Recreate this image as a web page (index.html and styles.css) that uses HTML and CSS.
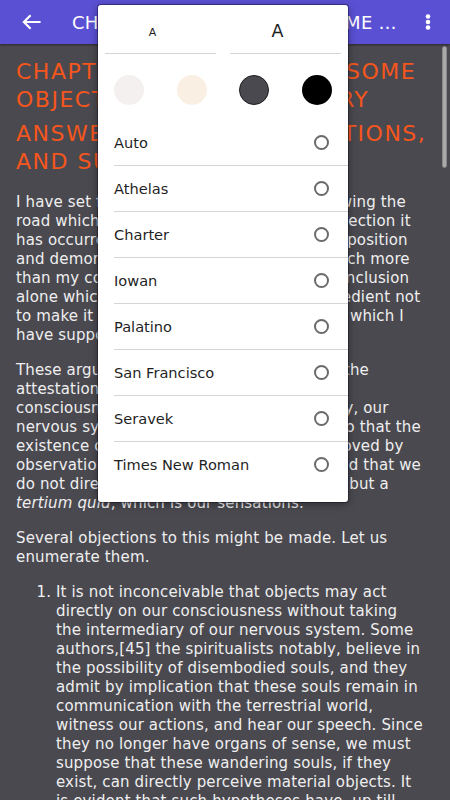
FILE: index.html
```html
<!DOCTYPE html>
<html lang="en">
<head>
<meta charset="utf-8">
<title>Reader</title>
<link rel="stylesheet" href="styles.css">
</head>
<body>
<div class="screen">
  <header class="appbar">
    <button class="icon-btn back-btn" aria-label="Back">
      <svg width="24" height="24" viewBox="0 0 24 24"><path d="M21.6 12H5.2M11.6 5.3L4.9 12l6.7 6.7" fill="none" stroke="#fff" stroke-width="2.2"/></svg>
    </button>
    <div class="appbar-title">Chapter VIII: Replies to Some Objections</div>
    <button class="icon-btn menu-btn" aria-label="More">
      <svg width="24" height="24" viewBox="0 0 24 24"><circle cx="12" cy="6.5" r="2.3" fill="#fff"/><circle cx="12" cy="12" r="2.3" fill="#fff"/><circle cx="12" cy="17.5" r="2.3" fill="#fff"/></svg>
    </button>
  </header>

  <main class="reader">
    <h1 class="chapter-title">Chapter VIII: Replies to Some Objections — Preliminary</h1>
    <h2 class="chapter-title sub">Answers to These Questions, and Summary</h2>
    <p>I have set forth these few ideas here, following the road which seemed the most direct. On reflection it has occurred to me that the order of my exposition and demonstration interests the reader much more than my conclusions; and it is never the conclusion alone which matters. I have thought it expedient not to make it a summary of all the reasons by which I have supposed it to be proven.</p>
    <p>These arguments are founded solely upon the attestation of experience, and of our own consciousness which showed us that, finally, our nervous system alone is perceived by us, so that the existence of objects has never yet been proved by observation. It must therefore be recognized that we do not directly perceive the actual objects, but a <em>tertium quid</em>, which is our sensations.</p>
    <p>Several objections to this might be made. Let us enumerate them.</p>
    <ol class="objections">
      <li>It is not inconceivable that objects may act directly on our consciousness without taking the intermediary of our nervous system. Some authors,<a class="note" href="#n45">[45]</a> the spiritualists notably, believe in the possibility of disembodied souls, and they admit by implication that these souls remain in communication with the terrestrial world, witness our actions, and hear our speech. Since they no longer have organs of sense, we must suppose that these wandering souls, if they exist, can directly perceive material objects. It is evident that such hypotheses have, up till now, received no scientific verification.</li>
    </ol>
  </main>

  <div class="scroll-thumb"></div>

  <div class="settings-popup">
    <div class="size-row">
      <button class="size-btn small">A</button>
      <button class="size-btn large">A</button>
    </div>
    <div class="theme-row">
      <div class="theme-cell"><span class="swatch light"></span></div>
      <div class="theme-cell"><span class="swatch sepia"></span></div>
      <div class="theme-cell"><span class="swatch dark"></span></div>
      <div class="theme-cell"><span class="swatch black"></span></div>
    </div>
    <ul class="font-list">
      <li class="font-item"><span>Auto</span><span class="radio"></span></li>
      <li class="font-item"><span>Athelas</span><span class="radio"></span></li>
      <li class="font-item"><span>Charter</span><span class="radio"></span></li>
      <li class="font-item"><span>Iowan</span><span class="radio"></span></li>
      <li class="font-item"><span>Palatino</span><span class="radio"></span></li>
      <li class="font-item"><span>San Francisco</span><span class="radio"></span></li>
      <li class="font-item"><span>Seravek</span><span class="radio"></span></li>
      <li class="font-item"><span>Times New Roman</span><span class="radio"></span></li>
    </ul>
  </div>
</div>
</body>
</html>
```

FILE: styles.css
```css
* { box-sizing: border-box; }

html, body {
  margin: 0;
  padding: 0;
  background: #4a494f;
}

body {
  font-family: "DejaVu Sans", "Liberation Sans", sans-serif;
}

.screen {
  position: relative;
  width: 450px;
  height: 800px;
  overflow: hidden;
  background: #4a494f;
}

/* App bar */
.appbar {
  height: 44px;
  background: #5a50d3;
  display: flex;
  align-items: center;
  box-shadow: 0 1px 2px rgba(0, 0, 0, 0.45);
  position: relative;
  z-index: 1;
}

.icon-btn {
  border: none;
  background: none;
  padding: 0;
  height: 44px;
  display: flex;
  align-items: center;
  justify-content: center;
  flex: none;
}

.back-btn { width: 64px; justify-content: flex-start; padding-left: 19px; }
.menu-btn { width: 44px; }

.appbar-title {
  flex: 1;
  min-width: 0;
  margin-left: 8px;
  color: #fff;
  font-size: 18px;
  letter-spacing: 0.3px;
  text-transform: uppercase;
  white-space: nowrap;
  overflow: hidden;
  text-overflow: ellipsis;
}

/* Reader content */
.reader {
  padding: 14px 16px 0;
  color: #efeff0;
  font-size: 15px;
  line-height: 19px;
  letter-spacing: 0.15px;
}

.chapter-title {
  margin: 0;
  color: #f4561d;
  font-size: 22px;
  line-height: 27.5px;
  font-weight: normal;
  letter-spacing: 1.5px;
  text-transform: uppercase;
}

.chapter-title.sub {
  margin-top: 7px;
}

.reader p {
  margin: 0 0 16px;
}

.reader .sub + p {
  margin-top: 18px;
}

.reader em { font-style: italic; }

.note {
  color: inherit;
  text-decoration: none;
}

.objections {
  margin: 0 8.5px 0 0;
  padding-left: 40px;
}

/* Scroll indicator */
.scroll-thumb {
  position: absolute;
  top: 46px;
  right: 3px;
  width: 5px;
  height: 122px;
  border-radius: 3px;
  background: #a9a9a9;
  border: 1px solid #8a8a8a;
}

/* Settings popup */
.settings-popup {
  position: absolute;
  top: 5px;
  left: 98px;
  width: 250px;
  background: #fff;
  border-radius: 3px;
  box-shadow: 0 0 0 1px rgba(0, 0, 30, 0.35), 0 2px 8px rgba(0, 0, 0, 0.4);
  z-index: 2;
  color: #222;
}

.size-row {
  display: grid;
  grid-template-columns: 1fr 1fr;
  column-gap: 14px;
  padding: 0 7px;
}

.size-btn {
  height: 49px;
  border: none;
  border-bottom: 1px solid #d5d5d5;
  background: none;
  padding: 6px 16px 0 0;
  font-family: inherit;
  color: #1d1d1d;
  line-height: 1;
}

.size-btn.small { font-size: 11px; }
.size-btn.large { font-size: 17.5px; }

.theme-row {
  display: flex;
  padding: 21px 0 15px;
}

.theme-cell {
  flex: 1;
  display: flex;
  justify-content: center;
}

.swatch {
  width: 30px;
  height: 30px;
  border-radius: 50%;
}

.swatch.light { background: #f3f0ef; }
.swatch.sepia { background: #f9f0e3; }
.swatch.dark { background: #4a494f; border: 1px solid #1e1e22; }
.swatch.black { background: #000; }

.font-list {
  list-style: none;
  margin: 0;
  padding: 0 0 15px;
}

.font-item {
  margin-left: 16px;
  height: 46px;
  padding-right: 19px;
  display: flex;
  align-items: center;
  justify-content: space-between;
  border-top: 1px solid #d5d5d5;
  font-size: 14.6px;
  color: #1f1f1f;
}

.font-item:first-child {
  height: 45px;
  border-top: none;
}

.radio {
  width: 15px;
  height: 15px;
  border-radius: 50%;
  border: 2px solid #6b6b6b;
}
```
